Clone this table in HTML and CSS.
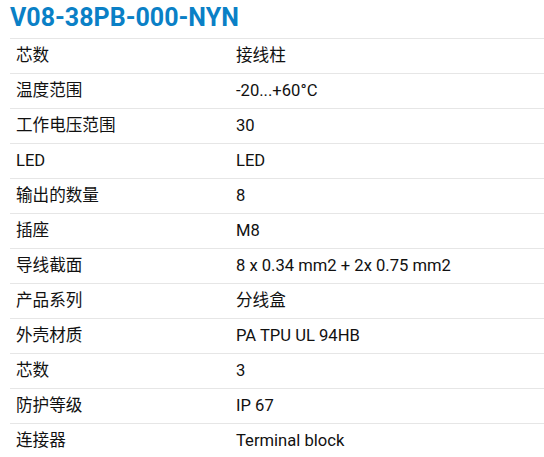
FILE: index.html
```html
<!DOCTYPE html>
<html lang="zh">
<head>
<meta charset="utf-8">
<link rel="stylesheet" href="styles.css">
</head>
<body>
<div class="page">
  <h1 class="title">V08-38PB-000-NYN</h1>
  <table class="specs">
    <tr><td class="k">芯数</td><td class="v">接线柱</td></tr>
    <tr><td class="k">温度范围</td><td class="v">-20...+60°C</td></tr>
    <tr><td class="k">工作电压范围</td><td class="v">30</td></tr>
    <tr><td class="k">LED</td><td class="v">LED</td></tr>
    <tr><td class="k">输出的数量</td><td class="v">8</td></tr>
    <tr><td class="k">插座</td><td class="v">M8</td></tr>
    <tr><td class="k">导线截面</td><td class="v">8 x 0.34 mm2 + 2x 0.75 mm2</td></tr>
    <tr><td class="k">产品系列</td><td class="v">分线盒</td></tr>
    <tr><td class="k">外壳材质</td><td class="v">PA TPU UL 94HB</td></tr>
    <tr><td class="k">芯数</td><td class="v">3</td></tr>
    <tr><td class="k">防护等级</td><td class="v">IP 67</td></tr>
    <tr><td class="k">连接器</td><td class="v">Terminal block</td></tr>
  </table>
</div>
</body>
</html>
```

FILE: styles.css
```css
html, body {
  margin: 0;
  padding: 0;
  background: #ffffff;
}
body {
  font-family: Roboto, "Noto Sans CJK SC", sans-serif;
  color: #111111;
  overflow: hidden;
}
.page {
  padding: 0 0 0 10px;
}
.title {
  margin: 0;
  padding-top: 1px;
  height: 37px;
  font-size: 25px;
  line-height: 34px;
  font-weight: 700;
  color: #0a80c6;
}
.specs {
  width: 534px;
  border-collapse: collapse;
  border-top: 1px solid #e6e6e6;
}
.specs td {
  border-bottom: 1px solid #e6e6e6;
  height: 34px;
  padding: 0 6px;
  font-size: 16.6px;
  line-height: 20px;
  vertical-align: middle;
}
.specs .k {
  width: 208px;
}
```
